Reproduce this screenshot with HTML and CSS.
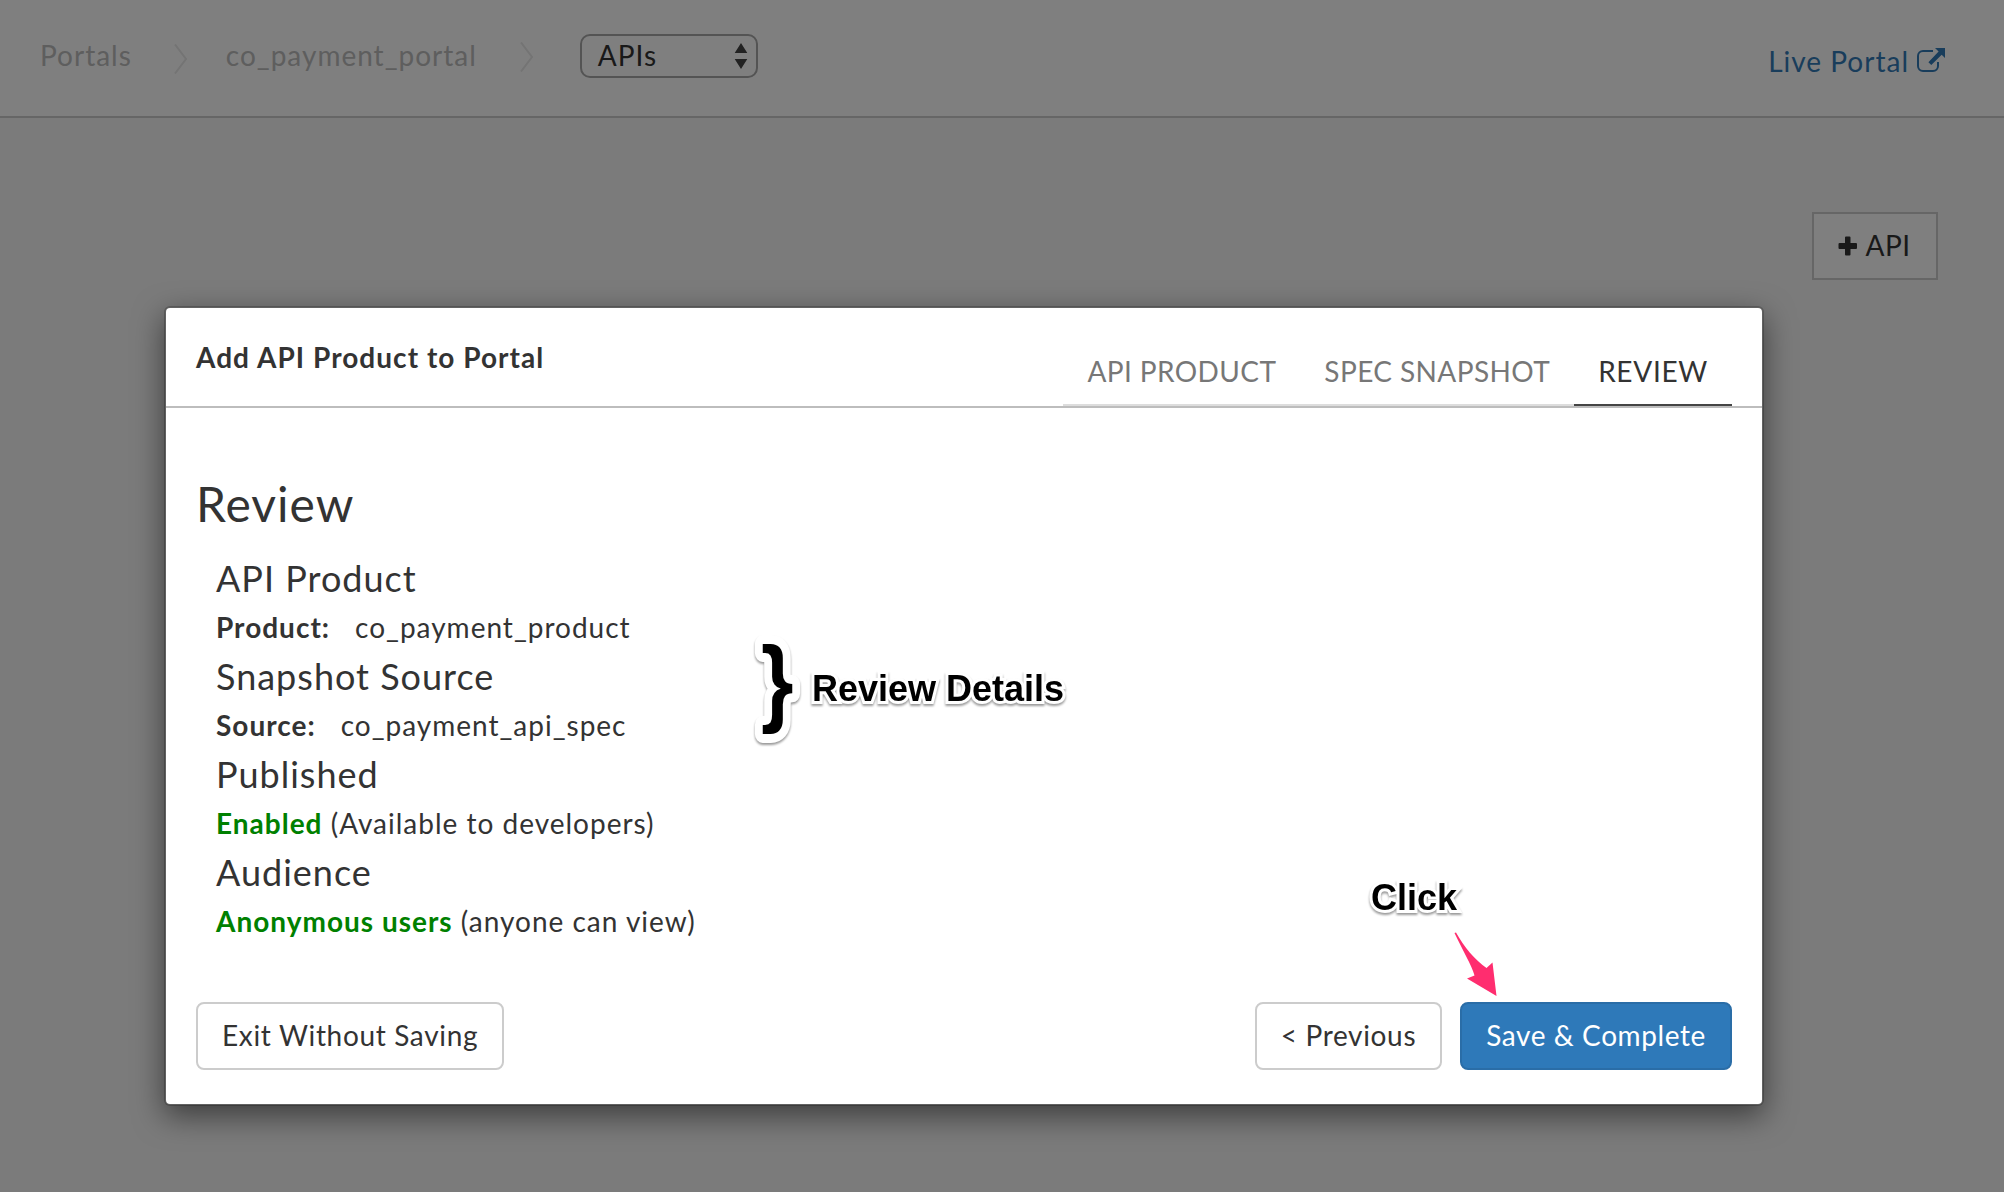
FILE: index.html
```html
<!DOCTYPE html>
<html lang="en">
<head>
<meta charset="utf-8">
<title>Add API Product to Portal</title>
<link rel="stylesheet" href="styles.css">
</head>
<body>
<div class="page">
  <header class="topbar">
    <nav class="breadcrumbs">
      <a class="crumb">Portals</a>
      <svg class="chevron" width="14" height="30" viewBox="0 0 14 30"><path d="M1 0.500L12 15L1 29.500" fill="none" stroke="#e8e8e8" stroke-width="2"/></svg>
      <a class="crumb">co_payment_portal</a>
      <svg class="chevron second" width="14" height="30" viewBox="0 0 14 30"><path d="M1 0.500L12 15L1 29.500" fill="none" stroke="#e8e8e8" stroke-width="2"/></svg>
      <div class="select"><span>APIs</span>
        <svg width="14" height="26" viewBox="0 0 14 26"><path d="M7 0L13.300 10H.7zM7 26L13.300 16H.7z" fill="#444"/></svg>
      </div>
    </nav>
    <a class="live"><span>Live Portal</span>
      <svg width="28" height="24" viewBox="0 0 28 24"><path d="M16 3H6a5 5 0 0 0-5 5V18a5 5 0 0 0 5 5H16a5 5 0 0 0 5-5V14" fill="none" stroke="#337ab7" stroke-width="2"/><path d="M18 0H28V10L24.700 6.700L14.300 17.100L11.400 14.200L21.600 3.600z" fill="#337ab7"/></svg>
    </a>
  </header>
  <main class="content">
    <button class="add-api"><svg width="20" height="20" viewBox="0 0 20 20"><path d="M8 .5h3.500a1 1 0 0 1 1 1V7H18a1 1 0 0 1 1 1v4a1 1 0 0 1-1 1h-5.500v5.500a1 1 0 0 1-1 1H8a1 1 0 0 1-1-1V13H1.500a1 1 0 0 1-1-1V8a1 1 0 0 1 1-1H7V1.500a1 1 0 0 1 1-1z" fill="#333"/></svg><span>API</span></button>
  </main>
</div>
<div class="backdrop">
  <section class="modal" role="dialog">
    <div class="modal-header">
      <h1 class="modal-title">Add API Product to Portal</h1>
      <div class="tabs">
        <div class="tab">API PRODUCT</div>
        <div class="tab">SPEC SNAPSHOT</div>
        <div class="tab active">REVIEW</div>
      </div>
    </div>
    <div class="modal-body">
      <h2>Review</h2>
      <div class="details">
        <h3>API Product</h3>
        <p><strong class="label">Product:</strong><span>co_payment_product</span></p>
        <h3>Snapshot Source</h3>
        <p><strong class="label">Source:</strong><span>co_payment_api_spec</span></p>
        <h3>Published</h3>
        <p><strong class="on">Enabled</strong> <span>(Available to developers)</span></p>
        <h3>Audience</h3>
        <p><strong class="on">Anonymous users</strong> <span>(anyone can view)</span></p>
      </div>
    </div>
    <div class="modal-footer">
      <button class="btn">Exit Without Saving</button>
      <div class="actions">
        <button class="btn">&lt; Previous</button>
        <button class="btn primary">Save &amp; Complete</button>
      </div>
    </div>
  </section>
</div>
<svg class="brace" width="80" height="120" viewBox="0 0 80 120"><text transform="translate(20 87) scale(.87 1)">}</text></svg>
<div class="note note-review">Review Details</div>
<div class="note note-click">Click</div>
<svg class="arrow" width="44" height="66" viewBox="0 0 44 66"><path d="M.5 1L2 .5C10 15 21 28 32.500 36L38.500 30.500L42.500 64L13 46.500L20.500 43.500C18 34 8 17 .5 1z" fill="#ff2d6f"/></svg>
</body>
</html>
```
FILE: styles.css
```css
* { box-sizing: border-box; }
body {
  margin: 0;
  width: 2004px;
  height: 1192px;
  overflow: hidden;
  background: #f7f7f7;
  color: #333;
  font: 28px/40px Lato, sans-serif;
  letter-spacing: 1px;
}
h1, h2, h3, p { margin: 0; font-weight: 400; }
button { font: inherit; letter-spacing: inherit; color: inherit; }
svg { display: block; flex: none; }

.topbar {
  display: flex;
  justify-content: space-between;
  height: 118px;
  padding: 34px 59px 0 40px;
  background: #fff;
  border-bottom: 2px solid #ccc;
}
.breadcrumbs { display: flex; align-items: flex-start; }
.crumb { color: #bcbcbc; padding-top: 1px; }
.chevron { margin: 10px 38px 0 42px; }
.chevron.second { margin: 8px 46px 0 43px; }
.select {
  display: flex;
  align-items: center;
  justify-content: space-between;
  width: 178px;
  height: 44px;
  padding: 0 8px 0 16px;
  border: 2px solid #a8a8a8;
  border-radius: 10px;
}
.select span { padding-bottom: 2px; }
.live { display: flex; gap: 8px; padding-top: 7px; color: #337ab7; }
.live svg { margin-top: 7px; }

.content { display: flex; justify-content: flex-end; padding: 94px 66px 0 0; }
.add-api {
  display: flex;
  align-items: center;
  justify-content: center;
  gap: 8px;
  width: 126px;
  height: 68px;
  padding: 0 2px 0 0;
  background: #fff;
  border: 2px solid #ccc;
  letter-spacing: .4px;
}
.add-api span { padding-bottom: 2px; }

.backdrop {
  position: absolute;
  inset: 0;
  padding: 306px 0 0 164px;
  background: rgba(0, 0, 0, .5);
}
.modal {
  width: 1600px;
  height: 800px;
  display: flex;
  flex-direction: column;
  background: #fff;
  background-clip: padding-box;
  border: 2px solid rgba(0, 0, 0, .2);
  border-radius: 6px;
  box-shadow: 0 10px 30px rgba(0, 0, 0, .5);
}
.modal-header {
  display: flex;
  justify-content: space-between;
  height: 100px;
  padding: 0 30px;
  border-bottom: 2px solid #bdbdbd;
}
.modal-title { padding-top: 29px; font-size: 28px; font-weight: 700; letter-spacing: 1.040px; }
.tabs { display: flex; letter-spacing: .4px; }
.tab {
  padding: 43px 24px 0;
  color: #777;
  border-bottom: 2px solid #ddd;
}
.tab.active { color: #333; border-color: #444; letter-spacing: .7px; }

.modal-body { flex: 1; padding: 69px 30px 0; }
.modal-body h2 { font-size: 48px; line-height: 54px; }
.details { padding: 21px 0 0 20px; }
.details h3 { font-size: 36px; line-height: 52px; }
.details p { line-height: 46px; }
.label { margin-right: 25px; }
.on { color: green; }

.modal-footer { display: flex; justify-content: space-between; padding: 0 30px 34px; }
.actions { display: flex; gap: 18px; }
.btn {
  height: 68px;
  padding: 0 24px 2px;
  background: #fff;
  border: 2px solid #ccc;
  border-radius: 8px;
  letter-spacing: .66px;
}
.btn.primary { background: #2e79b9; border-color: #2a6da7; color: #fff; letter-spacing: .6px; }

.note {
  position: absolute;
  font: 700 36px/40px "Liberation Sans", Arial, sans-serif;
  letter-spacing: 0;
  color: #000;
  white-space: nowrap;
  -webkit-text-stroke: 6px #fff;
  paint-order: stroke fill;
  filter: drop-shadow(0 2px 1px rgba(0, 0, 0, .4));
}
.note-review { left: 812px; top: 669px; }
.note-click { left: 1371px; top: 878px; }
.brace {
  position: absolute;
  left: 741px;
  top: 627px;
  font: 700 96px "Liberation Sans", Arial, sans-serif;
  letter-spacing: 0;
  fill: #000;
  stroke: #fff;
  stroke-width: 18px;
  stroke-linejoin: round;
  paint-order: stroke fill;
  filter: drop-shadow(0 2px 1px rgba(0, 0, 0, .4));
}
.arrow { position: absolute; left: 1454px; top: 932px; }
```
